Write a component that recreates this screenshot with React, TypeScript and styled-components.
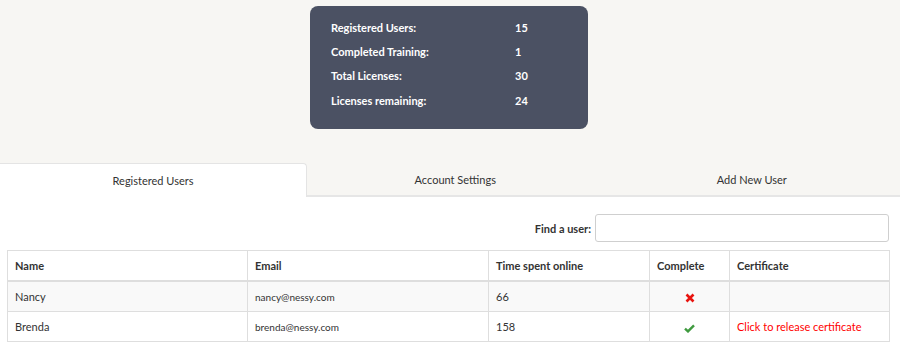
import React from 'react'
import styled, { createGlobalStyle } from 'styled-components'

interface iuser {
  name: string,
  email: string,
  time: number,
  complete: boolean
}

const stats = [
  { label: 'Registered Users:', value: '15' },
  { label: 'Completed Training:', value: '1' },
  { label: 'Total Licenses:', value: '30' },
  { label: 'Licenses remaining:', value: '24' },
]

const users: iuser[] = [
  { name: 'Nancy', email: 'nancy@nessy.com', time: 66, complete: false },
  { name: 'Brenda', email: 'brenda@nessy.com', time: 158, complete: true },
]

const tabs = ['Registered Users', 'Account Settings', 'Add New User']

const GlobalStyle = createGlobalStyle`
  body {
    margin: 0;
    background: #ffffff;
    font-family: Lato, "Liberation Sans", sans-serif;
    color: #333;
  }
`

const App = () => {
  const [active, setActive] = React.useState(0)
  const [search, setSearch] = React.useState('')

  return (
    <Page>
      <GlobalStyle />
      <Top>
        <StatsBox>
          {stats.map((s) => (
            <StatRow key={s.label}>
              <StatLabel>{s.label}</StatLabel>
              <span>{s.value}</span>
            </StatRow>
          ))}
        </StatsBox>
      </Top>

      <TabBar>
        {tabs.map((t, i) => (
          <Tab key={t} $active={i === active} onClick={() => setActive(i)}>
            {t}
          </Tab>
        ))}
      </TabBar>

      <Body>
        <SearchRow>
          <SearchLabel htmlFor="find">Find a user:</SearchLabel>
          <SearchInput id="find" value={search} onChange={(e) => setSearch(e.target.value)} />
        </SearchRow>

        <Table>
          <colgroup>
            <col style={{ width: 240 }} />
            <col style={{ width: 241 }} />
            <col style={{ width: 161 }} />
            <col style={{ width: 80 }} />
            <col />
          </colgroup>
          <thead>
            <tr>
              <Th>Name</Th>
              <Th>Email</Th>
              <Th>Time spent online</Th>
              <Th>Complete</Th>
              <Th>Certificate</Th>
            </tr>
          </thead>
          <tbody>
            {users.map((u, i) => (
              <Row key={u.email} $odd={i % 2 === 0}>
                <Td>{u.name}</Td>
                <Td $small>{u.email}</Td>
                <Td>{u.time}</Td>
                <Td $center>{u.complete ? <Check /> : <Cross />}</Td>
                <Td>{u.complete && <CertLink>Click to release certificate</CertLink>}</Td>
              </Row>
            ))}
          </tbody>
        </Table>
      </Body>
    </Page>
  )
}

const Cross = () => (
  <svg width="10" height="10" viewBox="0 0 10 10">
    <path d="M1.5 1.5 L8.5 8.5 M8.5 1.5 L1.5 8.5" stroke="#e8140f" strokeWidth="2.6" strokeLinecap="butt" />
  </svg>
)

const Check = () => (
  <svg width="11" height="9" viewBox="0 0 11 9">
    <path d="M1 4.6 L4 7.4 L10 1.4" stroke="#3f9a3f" strokeWidth="2.4" fill="none" strokeLinejoin="miter" />
  </svg>
)

export default App

const Page = styled.div`
  width: 900px;
  min-height: 345px;
  background: #fff;
`

const Top = styled.div`
  background: #f7f6f3;
  padding: 6px 0 34px;
  display: flex;
  justify-content: center;
`

const StatsBox = styled.div`
  width: 278px;
  margin-left: -2px;
  box-sizing: border-box;
  height: 123px;
  background: #4b5163;
  border-radius: 8px;
  padding: 9px 20px 0 21px;
  color: #fff;
  font-size: 11px;
  font-weight: 700;
  display: flex;
  flex-direction: column;
`

const StatRow = styled.div`
  display: flex;
  height: 24.4px;
  align-items: center;
`

const StatLabel = styled.span`
  width: 184px;
`

const TabBar = styled.div`
  display: flex;
  background: #f7f6f3;
  height: 34px;
`

const Tab = styled.div<{ $active: boolean }>`
  flex: ${(p) => (p.$active ? '0 0 307px' : '1')};
  display: flex;
  align-items: center;
  justify-content: center;
  font-size: 11px;
  font-weight: 400;
  color: #333;
  cursor: pointer;
  box-sizing: border-box;
  background: ${(p) => (p.$active ? '#fff' : 'transparent')};
  border-top: ${(p) => (p.$active ? '1px solid #e4e4e4' : 'none')};
  border-right: ${(p) => (p.$active ? '1px solid #e4e4e4' : 'none')};
  border-bottom: ${(p) => (p.$active ? 'none' : '2px solid #e6e6e6')};
  border-top-right-radius: ${(p) => (p.$active ? '4px' : '0')};
`

const Body = styled.div`
  padding: 17px 10px 0 7px;
`

const SearchRow = styled.div`
  display: flex;
  justify-content: flex-end;
  align-items: center;
  gap: 4px;
  margin-bottom: 8px;
`

const SearchLabel = styled.label`
  font-size: 11px;
  font-weight: 700;
  color: #333;
`

const SearchInput = styled.input`
  width: 294px;
  height: 28px;
  box-sizing: border-box;
  border: 1px solid #cfcfcf;
  border-radius: 3px;
  background: #fff;
  outline: none;
  margin-right: 1px;
`

const Table = styled.table`
  width: 883px;
  border-collapse: collapse;
  table-layout: fixed;
  font-size: 11px;
  border: 1px solid #dedede;
`

const Th = styled.th`
  text-align: left;
  font-weight: 700;
  height: 29px;
  padding: 0 7px;
  border: 1px solid #dedede;
  border-bottom: 2px solid #dedede;
  color: #333;
`

const Row = styled.tr<{ $odd: boolean }>`
  background: ${(p) => (p.$odd ? '#f9f9f9' : '#fff')};
`

const Td = styled.td<{ $small?: boolean, $center?: boolean }>`
  height: 29px;
  padding: 0 7px;
  border: 1px solid #dedede;
  font-size: ${(p) => (p.$small ? '10px' : '11px')};
  text-align: ${(p) => (p.$center ? 'center' : 'left')};
  color: #333;
  svg {
    vertical-align: middle;
  }
`

const CertLink = styled.span`
  color: #ff0000;
  cursor: pointer;
`
